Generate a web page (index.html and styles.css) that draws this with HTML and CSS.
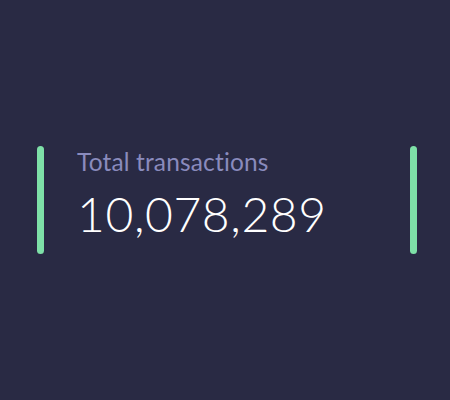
FILE: index.html
```html
<!DOCTYPE html>
<html>
<head>
<meta charset="utf-8">
<link rel="stylesheet" href="styles.css">
</head>
<body>
<div class="stats">
  <div class="stat">
    <div class="bar"></div>
    <div class="info">
      <div class="label">Total transactions</div>
      <div class="value">10,078,289</div>
    </div>
  </div>
  <div class="stat">
    <div class="bar"></div>
    <div class="info">
      <div class="label">Total volume</div>
      <div class="value">$4,204,110</div>
    </div>
  </div>
</div>
</body>
</html>
```
FILE: styles.css
```css
html, body {
  margin: 0;
  padding: 0;
  width: 450px;
  height: 400px;
  overflow: hidden;
  background: #292a44;
}
.stats {
  display: flex;
  align-items: center;
  height: 400px;
  padding-left: 37px;
  box-sizing: border-box;
}
.stat {
  display: flex;
  align-items: stretch;
  gap: 33px;
  width: 373px;
  flex-shrink: 0;
}
.bar {
  width: 7px;
  height: 108px;
  border-radius: 4px;
  background: #7ee0a8;
  flex-shrink: 0;
}
.info {
  display: flex;
  flex-direction: column;
  padding-top: 1px;
  white-space: nowrap;
}
.label {
  font-family: "Lato", "Noto Sans", sans-serif;
  font-size: 24.5px;
  color: #8a8bbd;
  line-height: 30px;
  letter-spacing: 0.15px;
}
.value {
  font-family: "Lato", "Noto Sans", sans-serif;
  font-weight: 300;
  font-size: 48px;
  color: #ffffff;
  line-height: 60px;
  margin-top: 7px;
  letter-spacing: 0.6px;
}
```
